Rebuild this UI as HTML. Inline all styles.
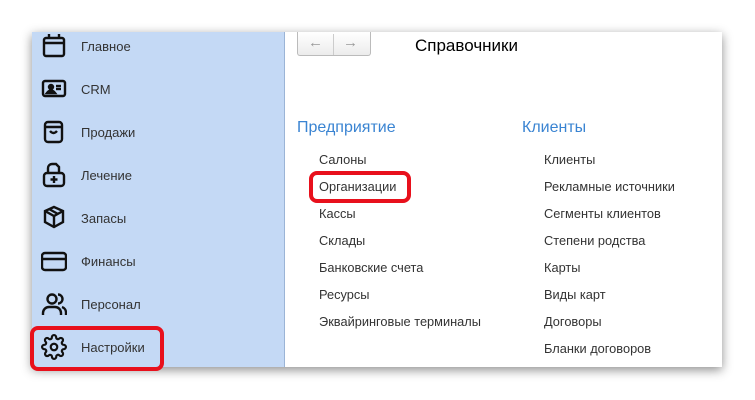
<!DOCTYPE html><html><head><style>
body{margin:0;width:755px;height:400px;background:#fff;position:relative;overflow:hidden;font-family:"Liberation Sans",sans-serif}
.panel{position:absolute;left:32px;top:32px;width:690px;height:335px;background:#fff;box-shadow:0 3px 10px rgba(0,0,0,.45)}
.side{position:absolute;left:0;top:0;width:252px;height:335px;background:#c4d9f5;border-right:1px solid #9bb4d6}
.it{position:absolute;left:49px;font-size:13px;color:#333}
.ic{position:absolute;left:9px;width:26px;height:26px}
.t{position:absolute;font-size:12.8px;color:#333}
.h{position:absolute;font-size:16px;color:#3a84d2}
.red{position:absolute;border:4px solid #e8101c;border-radius:8px}
</style></head><body>
<div class="panel">
<div class="side">
<svg class="ic" style="top:1px" viewBox="0 0 26 26" fill="none" stroke="#111" stroke-width="2.4"><rect x="3" y="5" width="20" height="18" rx="2"/><line x1="3" y1="10" x2="23" y2="10"/><line x1="8" y1="1" x2="8" y2="6"/><line x1="18" y1="1" x2="18" y2="6"/></svg>
<div class="it" style="top:7px">Главное</div>
<svg class="ic" style="top:44px" viewBox="0 0 26 26" fill="none" stroke="#111" stroke-width="2.4"><rect x="2" y="5" width="22" height="15" rx="2"/><circle cx="10" cy="11" r="2" fill="#111"/><path d="M6 17 q4 -5 8 0 z" fill="#111"/><line x1="15" y1="10" x2="20" y2="10"/><line x1="15" y1="13" x2="20" y2="13"/></svg>
<div class="it" style="top:50px">CRM</div>
<svg class="ic" style="top:87px" viewBox="0 0 26 26" fill="none" stroke="#111" stroke-width="2.4"><rect x="4" y="3" width="17" height="20" rx="3"/><line x1="4" y1="8" x2="21" y2="8"/><path d="M9 12 q3.5 4 7 0"/></svg>
<div class="it" style="top:93px">Продажи</div>
<svg class="ic" style="top:130px" viewBox="0 0 26 26" fill="none" stroke="#111" stroke-width="2.4"><path d="M7 11 v-5 a4 4 0 0 1 4 -4 h4 l3 3 v6"/><rect x="3" y="11" width="20" height="13" rx="3"/><line x1="13" y1="14" x2="13" y2="21"/><line x1="9.5" y1="17.5" x2="16.5" y2="17.5"/></svg>
<div class="it" style="top:136px">Лечение</div>
<svg class="ic" style="top:173px" viewBox="0 0 26 26" fill="none" stroke="#111" stroke-width="2.4"><path d="M13 2 l9 4 v11 l-9 5 l-9 -5 v-11 z"/><path d="M4 6 l9 5 l9 -5"/><line x1="13" y1="11" x2="13" y2="22"/><path d="M8 4 l9 5"/></svg>
<div class="it" style="top:179px">Запасы</div>
<svg class="ic" style="top:216px" viewBox="0 0 26 26" fill="none" stroke="#111" stroke-width="2.4"><rect x="1" y="5" width="24" height="17" rx="3"/><line x1="1" y1="11" x2="25" y2="11"/></svg>
<div class="it" style="top:222px">Финансы</div>
<svg class="ic" style="top:259px" viewBox="0 0 26 26" fill="none" stroke="#111" stroke-width="2.4"><circle cx="11" cy="8" r="4.5"/><path d="M2 24 v-2 a6 6 0 0 1 6 -6 h6 a6 6 0 0 1 6 6 v2"/><path d="M17 3.5 a4.5 4.5 0 0 1 0 9"/><path d="M21 16 a6 6 0 0 1 4 6 v2"/></svg>
<div class="it" style="top:265px">Персонал</div>
<svg class="ic" style="top:302px" viewBox="0 0 24 24" fill="none" stroke="#111" stroke-width="2"><circle cx="12" cy="12" r="3"/><path d="M19.4 15a1.65 1.65 0 0 0 .33 1.82l.06.06a2 2 0 1 1-2.830 2.83l-.06-.06a1.65 1.65 0 0 0-1.82-.33 1.65 1.65 0 0 0-1 1.51V21a2 2 0 1 1-4 0v-.09A1.65 1.65 0 0 0 9 19.4a1.65 1.65 0 0 0-1.820.33l-.06.06a2 2 0 1 1-2.830-2.83l.06-.06A1.65 1.65 0 0 0 4.68 15a1.65 1.65 0 0 0-1.510-1H3a2 2 0 1 1 0-4h.09A1.65 1.65 0 0 0 4.6 9a1.65 1.65 0 0 0-.33-1.82l-.06-.06a2 2 0 1 1 2.830-2.83l.06.06A1.65 1.65 0 0 0 9 4.68 1.65 1.65 0 0 0 10 3.17V3a2 2 0 1 1 4 0v.09a1.65 1.65 0 0 0 1 1.51 1.65 1.65 0 0 0 1.820-.33l.06-.06a2 2 0 1 1 2.830 2.83l-.06.06A1.65 1.65 0 0 0 19.4 9a1.65 1.65 0 0 0 1.51 1H21a2 2 0 1 1 0 4h-.09a1.65 1.65 0 0 0-1.51 1z"/></svg>
<div class="it" style="top:308px">Настройки</div>
</div>
<div style="position:absolute;left:265px;top:0;width:72px;height:23px;border:1px solid #bbb;border-top:none;border-radius:0 0 3px 3px;background:linear-gradient(#fff,#ececec)"></div>
<div style="position:absolute;left:301px;top:2px;width:1px;height:21px;background:#ccc"></div>
<div style="position:absolute;left:276px;top:2px;font-size:15px;color:#999">&#8592;</div>
<div style="position:absolute;left:311px;top:2px;font-size:15px;color:#999">&#8594;</div>
<div style="position:absolute;left:383px;top:4px;font-size:17px;color:#000">Справочники</div>
<div class="h" style="left:265px;top:87px">Предприятие</div>
<div class="h" style="left:490px;top:87px">Клиенты</div>
<div class="t" style="left:287px;top:120px">Салоны</div>
<div class="t" style="left:287px;top:147px">Организации</div>
<div class="t" style="left:287px;top:174px">Кассы</div>
<div class="t" style="left:287px;top:201px">Склады</div>
<div class="t" style="left:287px;top:228px">Банковские счета</div>
<div class="t" style="left:287px;top:255px">Ресурсы</div>
<div class="t" style="left:287px;top:282px">Эквайринговые терминалы</div>
<div class="t" style="left:512px;top:120px">Клиенты</div>
<div class="t" style="left:512px;top:147px">Рекламные источники</div>
<div class="t" style="left:512px;top:174px">Сегменты клиентов</div>
<div class="t" style="left:512px;top:201px">Степени родства</div>
<div class="t" style="left:512px;top:228px">Карты</div>
<div class="t" style="left:512px;top:255px">Виды карт</div>
<div class="t" style="left:512px;top:282px">Договоры</div>
<div class="t" style="left:512px;top:309px">Бланки договоров</div>
</div>
<div class="red" style="left:30px;top:326px;width:126px;height:37px"></div>
<div class="red" style="left:309px;top:171px;width:94px;height:24px"></div>
</body></html>
